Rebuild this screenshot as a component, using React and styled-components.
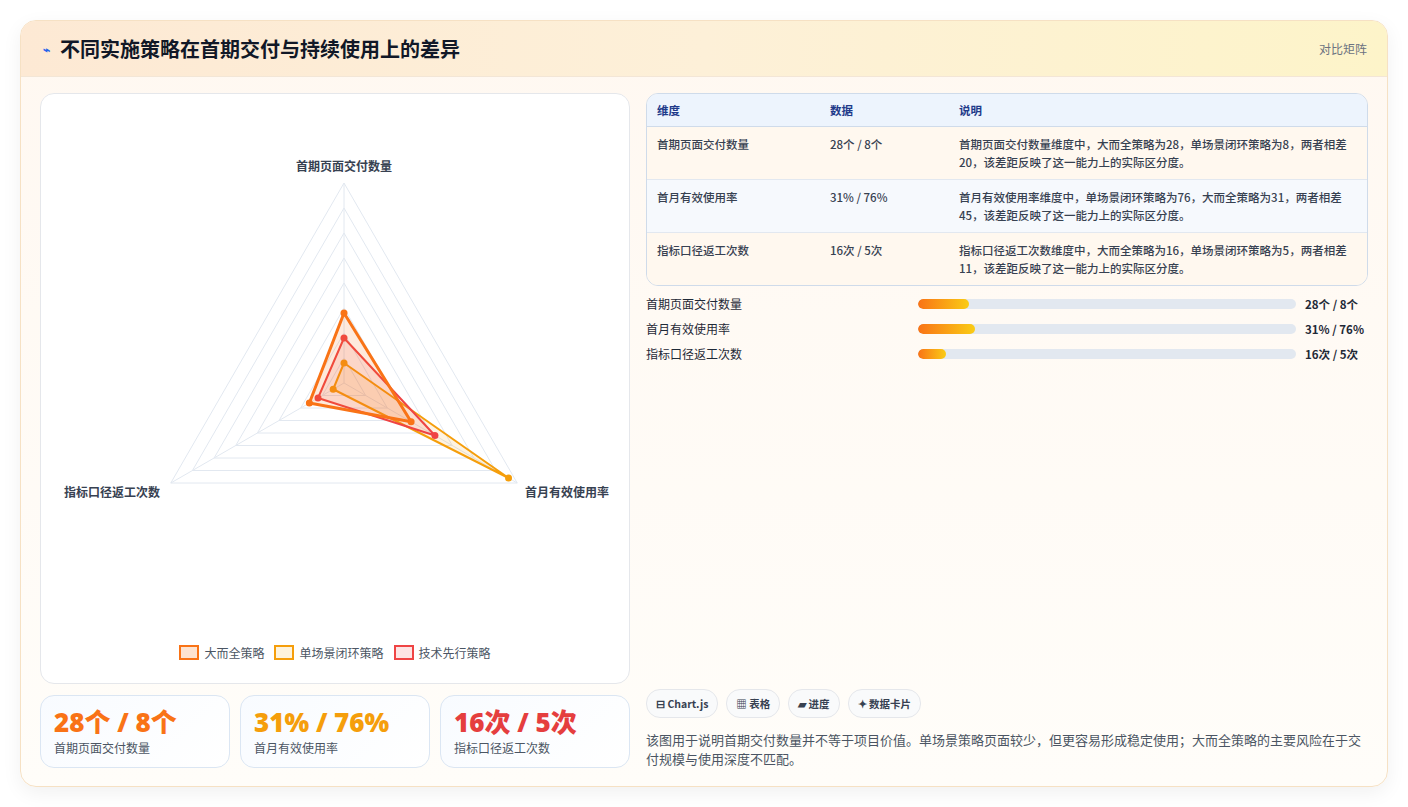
import React from 'react';
import styled, { createGlobalStyle } from 'styled-components';

const Global = createGlobalStyle`
  body { margin: 0; background: #fff; font-family: "Noto Sans CJK SC", "Noto Sans", sans-serif; }
`;

const Page = styled.div`
  padding: 20px 20px 20px 20px;
  width: 1408px;
  box-sizing: border-box;
`;

const Card = styled.div`
  width: 1368px;
  box-sizing: border-box;
  border: 1px solid #f6e1c4;
  border-radius: 16px;
  overflow: hidden;
  background: linear-gradient(180deg, #fff8f1 0%, #fffdf9 100%);
  box-shadow: 0 6px 20px rgba(0,0,0,0.06);
`;

const Header = styled.div`
  height: 55px;
  display: flex;
  align-items: center;
  justify-content: space-between;
  padding: 0 20px 0 22px;
  background: linear-gradient(90deg, #fde9d4 0%, #fdf0d8 50%, #fdf4c9 100%);
  border-bottom: 1px solid #f3e6d6;
`;

const Title = styled.h1`
  margin: 0;
  font-size: 20px;
  font-weight: 700;
  color: #111827;
  display: flex;
  align-items: center;
  gap: 10px;
`;

const Tag = styled.span`
  font-size: 12px;
  color: #6b7280;
`;

const Body = styled.div`
  display: grid;
  grid-template-columns: 590px 1fr;
  gap: 16px;
  padding: 16px 19px 18px 19px;
`;

const Col = styled.div`
  display: flex;
  flex-direction: column;
  gap: 11px;
`;

const ChartCard = styled.div`
  height: 591px;
  box-sizing: border-box;
  background: #fff;
  border: 1px solid #e5e7eb;
  border-radius: 14px;
  position: relative;
`;

const Legend = styled.div`
  position: absolute;
  left: 0; right: 0; bottom: 22px;
  display: flex;
  justify-content: center;
  gap: 10px;
  font-size: 12px;
  color: #4b5563;
`;

const LegItem = styled.span`
  display: flex;
  align-items: center;
  gap: 5px;
  &::before {
    content: "";
    width: 16px; height: 11px;
    border: 2px solid ${p => p.c};
    background: ${p => p.bg};
  }
`;

const Kpis = styled.div`
  display: grid;
  grid-template-columns: repeat(3, 1fr);
  gap: 10px;
`;

const Kpi = styled.div`
  height: 73px;
  box-sizing: border-box;
  border: 1px solid #dbe6f3;
  border-radius: 14px;
  background: linear-gradient(135deg, #f8fbff, #fff);
  padding: 10px 13px;
`;

const KpiVal = styled.div`
  font-size: 26px;
  font-weight: 800;
  color: ${p => p.c};
  line-height: 32px;
  font-family: "Open Sans", "Noto Sans CJK SC", sans-serif;
`;

const KpiLabel = styled.div`
  font-size: 12px;
  color: #4b5563;
  margin-top: 1px;
`;

const Table = styled.table`
  width: 100%;
  border-collapse: separate;
  border-spacing: 0;
  border: 1px solid #cfdbea;
  border-radius: 12px;
  overflow: hidden;
  font-size: 11.5px;
  color: #374151;
  th {
    text-align: left;
    background: #edf4fd;
    color: #1e3a8a;
    font-weight: 600;
    height: 32px;
    padding: 0 10px;
    border-bottom: 1px solid #cfdbea;
  }
  td {
    vertical-align: top;
    padding: 8px 10px;
    height: 36px;
    line-height: 18px;
    font-weight: 500;
    border-bottom: 1px solid #e2e8f0;
  }
  tr:nth-child(odd) td { background: #fff8ef; }
  tr:nth-child(even) td { background: #f6f9fd; }
  tr:last-child td { border-bottom: none; }
`;

const Bars = styled.div`
  display: flex;
  flex-direction: column;
  gap: 6px;
  margin-top: -3px;
`;

const BarRow = styled.div`
  display: grid;
  grid-template-columns: 272px 387px 1fr;
  align-items: center;
  font-size: 12px;
  color: #1f2937;
  height: 19px;
`;

const Track = styled.div`
  height: 10px;
  background: #e2e8f0;
  border-radius: 5px;
  margin-right: 9px;
  overflow: hidden;
`;

const Fill = styled.div`
  height: 100%;
  border-radius: 5px;
  background: linear-gradient(90deg, #f97316, #facc15);
`;

const BarVal = styled.span`
  font-weight: 700;
  font-size: 11.5px;
`;

const Footer = styled.div`
  margin-top: auto;
  display: flex;
  flex-direction: column;
  gap: 12px;
`;

const Chips = styled.div`
  display: flex;
  gap: 8px;
`;

const Chip = styled.span`
  font-size: 10.5px;
  font-weight: 600;
  color: #374151;
  padding: 0 9px;
  height: 27px;
  display: flex;
  align-items: center;
  border: 1px solid #e5e7eb;
  border-radius: 14px;
  background: #f9fafb;
`;

const Note = styled.p`
  margin: 0;
  font-size: 13px;
  line-height: 19px;
  color: #4b5563;
`;

const AxisLabel = styled.text`
  font-size: 12px;
  font-weight: 600;
  fill: #374151;
`;

const cx = 303, cy = 289, R = 200, MAX = 80;
const angles = [-90, 30, 150].map(a => (a * Math.PI) / 180);
const pt = (v, i) => [cx + (R * v / MAX) * Math.cos(angles[i]), cy + (R * v / MAX) * Math.sin(angles[i])];
const poly = vals => vals.map((v, i) => pt(v, i).join(',')).join(' ');

const series = [
  { vals: [8, 76, 5], c: '#f59e0b', fill: 'rgba(245,158,11,0.12)', w: 2 },
  { vals: [18, 42, 12], c: '#ef4444', fill: 'rgba(239,68,68,0.12)', w: 2 },
  { vals: [28, 31, 16], c: '#f97316', fill: 'rgba(249,115,22,0.15)', w: 3 },
];

const Radar = () => (
  <svg width="590" height="560" style={{ display: 'block' }}>
    {[1, 2, 3, 4, 5, 6, 7, 8].map(k => (
      <polygon key={k} points={poly([k * 10, k * 10, k * 10])} fill="none" stroke="#e2e8f0" strokeWidth="1" />
    ))}
    {[0, 1, 2].map(i => {
      const [x, y] = pt(80, i);
      return <line key={i} x1={cx} y1={cy} x2={x} y2={y} stroke="#e2e8f0" />;
    })}
    {series.map((s, j) => (
      <g key={j}>
        <polygon points={poly(s.vals)} fill={s.fill} stroke={s.c} strokeWidth={s.w} strokeLinejoin="round" />
        {s.vals.map((v, i) => {
          const [x, y] = pt(v, i);
          return <circle key={i} cx={x} cy={y} r="3.5" fill={s.c} />;
        })}
      </g>
    ))}
    <AxisLabel x={cx} y={77} textAnchor="middle">首期页面交付数量</AxisLabel>
    <AxisLabel x={526} y={403} textAnchor="middle">首月有效使用率</AxisLabel>
    <AxisLabel x={71} y={403} textAnchor="middle">指标口径返工次数</AxisLabel>
  </svg>
);

const rows = [
  ['首期页面交付数量', '28个 / 8个', '首期页面交付数量维度中，大而全策略为28，单场景闭环策略为8，两者相差20，该差距反映了这一能力上的实际区分度。', 13.5],
  ['首月有效使用率', '31% / 76%', '首月有效使用率维度中，单场景闭环策略为76，大而全策略为31，两者相差45，该差距反映了这一能力上的实际区分度。', 15],
  ['指标口径返工次数', '16次 / 5次', '指标口径返工次数维度中，大而全策略为16，单场景闭环策略为5，两者相差11，该差距反映了这一能力上的实际区分度。', 7.5],
];

export default function App() {
  return (
    <Page>
      <Global />
      <Card>
        <Header>
          <Title><span style={{ color: '#2563eb', fontSize: 12 }}>⌁</span>不同实施策略在首期交付与持续使用上的差异</Title>
          <Tag>对比矩阵</Tag>
        </Header>
        <Body>
          <Col>
            <ChartCard>
              <Radar />
              <Legend>
                <LegItem c="#f97316" bg="#fde3d0">大而全策略</LegItem>
                <LegItem c="#f59e0b" bg="#fef3dc">单场景闭环策略</LegItem>
                <LegItem c="#ef4444" bg="#fde4e4">技术先行策略</LegItem>
              </Legend>
            </ChartCard>
            <Kpis>
              <Kpi><KpiVal c="#f97316">28个 / 8个</KpiVal><KpiLabel>首期页面交付数量</KpiLabel></Kpi>
              <Kpi><KpiVal c="#f59e0b">31% / 76%</KpiVal><KpiLabel>首月有效使用率</KpiLabel></Kpi>
              <Kpi><KpiVal c="#e53e3e">16次 / 5次</KpiVal><KpiLabel>指标口径返工次数</KpiLabel></Kpi>
            </Kpis>
          </Col>
          <Col>
            <Table>
              <thead>
                <tr><th style={{ width: 153 }}>维度</th><th style={{ width: 109 }}>数据</th><th>说明</th></tr>
              </thead>
              <tbody>
                {rows.map(r => (
                  <tr key={r[0]}><td>{r[0]}</td><td>{r[1]}</td><td>{r[2]}</td></tr>
                ))}
              </tbody>
            </Table>
            <Bars>
              {rows.map(r => (
                <BarRow key={r[0]}>
                  <span>{r[0]}</span>
                  <Track><Fill style={{ width: `${r[3]}%` }} /></Track>
                  <BarVal>{r[1]}</BarVal>
                </BarRow>
              ))}
            </Bars>
            <Footer>
              <Chips>
                <Chip>⊟ Chart.js</Chip>
                <Chip>▦ 表格</Chip>
                <Chip>▰ 进度</Chip>
                <Chip>✦ 数据卡片</Chip>
              </Chips>
              <Note>该图用于说明首期交付数量并不等于项目价值。单场景策略页面较少，但更容易形成稳定使用；大而全策略的主要风险在于交付规模与使用深度不匹配。</Note>
            </Footer>
          </Col>
        </Body>
      </Card>
    </Page>
  );
}
